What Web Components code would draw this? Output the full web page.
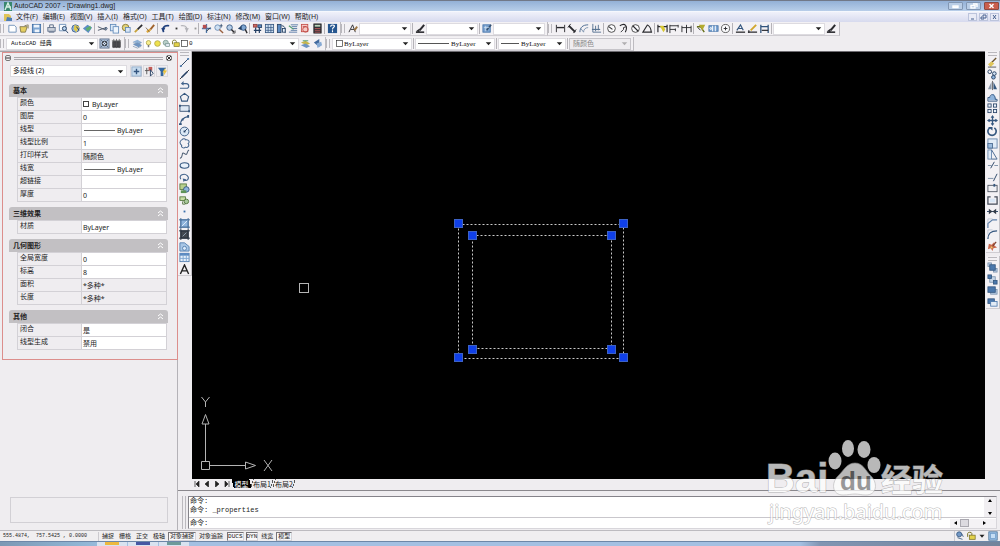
<!DOCTYPE html>
<html lang="zh-CN">
<head>
<meta charset="utf-8">
<title>AutoCAD 2007 - [Drawing1.dwg]</title>
<style>
html, body { margin: 0; height: 100%; overflow: hidden; }
body { font: 7px/10px "Noto Sans", "Noto Sans CJK SC", sans-serif; color: #222; background: #efedf0; }
</style>
</head>
<body>
<cad-app></cad-app>
<script>
const define = (name, css, render) => customElements.define(name, class extends HTMLElement {
  constructor() { super(); this.attachShadow({ mode: 'open' }); }
  connectedCallback() {
    const t = document.createElement('template');
    t.innerHTML = `<style>*{box-sizing:border-box}button{font:inherit;color:inherit;background:none;border:0;padding:0;margin:0}${css}</style>${render(this)}`;
    this.shadowRoot.replaceChildren(t.content.cloneNode(true));
  }
});

/* Icon artwork on a 12 x 12 grid */
const N = '#243f63', B = '#8fb4dc', K = '#2a2a2e';
const line = (d, c = N, w = 1) => `<path d="${d}" fill="none" stroke="${c}" stroke-width="${w}"/>`;
const fill = (d, c = N) => `<path d="${d}" fill="${c}"/>`;
const box = (x, y, w, h, f = '#e9f1fa', s = N) => `<rect x="${x}" y="${y}" width="${w}" height="${h}" fill="${f}" stroke="${s}" stroke-width=".9"/>`;
const circ = (x, y, r, f = 'none', s = N) => `<circle cx="${x}" cy="${y}" r="${r}" fill="${f}" stroke="${s}"/>`;
const ICONS = {
  new: fill('M2 2h6l2 2v6H2z', '#fff') + line('M2 2.5h6l2 2v5.5H2z', '#6d8fb8'),
  open: fill('M1 4h8l-2 6H2z', '#e5cf62') + line('M1 4h8l-2 6H2zM6 3l4-1v4', '#6d6438', .8),
  save: box(1.5, 1.5, 9, 9, '#7fa6d2', '#3f6ea6') + fill('M3 2h6v3H3zM4 7h5v3H4z', '#eef4fb'),
  plot: box(2, 5, 8, 4, '#c9ced8', '#596a85') + line('M4 5V2h4v3M3 10h6', '#596a85'),
  preview: fill('M1 1h7v8H1z', '#f8fbff') + line('M1.5 1.5h7v7h-7z', '#6d8fb8') + circ(7, 6, 2.2, '#b8d2ee') + line('M8.5 8l2.5 3'),
  publish: circ(6, 6, 4, '#86aede', '#4a6a96') + fill('M5 2l5 2-3 6-3-3z', '#dfc84c') + line('M7 4l3 4', N),
  dwf: fill('M1 6l5-4 5 3-4 6z', '#5d8cc4') + fill('M4 6l5-3 1 3-4 3z', '#5fae6b'),
  cut: line('M1 4l9 4M1 8l9-3', '#4a5568') + circ(10, 6, 1),
  copy: box(1.5, 1.5, 6, 7, '#dbe8f7', '#5f88b8') + box(4.5, 4, 6, 7, '#eef5fc', '#5f88b8'),
  paste: circ(5, 5, 3.6, '#e2d37a', '#8a7c38') + box(5, 5, 5, 5, '#dbe8f7', '#5f88b8'),
  match: line('M2 10l3-3', '#c6a23a', 2) + line('M5 7l5-5', K, 1.8),
  brush: line('M2 10l4-3', '#e0a93c', 2.6) + line('M6 7l4-5', '#a0622c', 2) + line('M1 5l4 5', '#6b5430', .8),
  undo: line('M4 10c-2-4 0-8 6-7', '#1f3f7c', 1.8) + fill('M1 6l5-1-2 4z', '#1f3f7c'),
  redo: line('M8 10c2-4 0-8-6-7', '#b3b3b8', 1.3) + fill('M11 6l-5-1 2 4z', '#b3b3b8'),
  pan: line('M6 1v10M1 6h10', '#4b78ac', 1.4) + fill('M2 2h4v4H2z', '#b84e4e') + line('M6 9l4-4', K),
  zoom: circ(5, 5, 3, '#cfe0f2', '#6d8fb8') + line('M7 7l4 4', '#9a6040', 1.5) + line('M9 1v4M7.500 3h3', N, .8),
  zoomw: circ(5, 5, 3, '#b6cde8', '#3f5f88') + line('M7 7l3 3', K, 1.6) + line('M11 8v3H8', K, .8),
  zoomp: circ(7, 5, 3, '#7fa6d2', '#33547f') + line('M9 7l2 4', K, 1.5) + fill('M1 6l4-3v5z', N),
  props: box(1.5, 1.5, 4, 3, '#d2695f', '#8b3d3d') + box(6.5, 2, 4, 3, '#5d8cc4') + line('M2 8h8M4 5v6M8 5v6', N, 1.3),
  dc: box(1.5, 1.5, 9, 9, '#cfe0f2', '#33547f') + line('M4.500 2v8M7.500 2v8M2 5h8M2 8h8', '#33547f', .8),
  tool: box(1.5, 1.5, 4, 9, '#5d8cc4') + line('M6 3c5 0 4 5 4 8', N) + box(7, 6, 3, 4),
  sheet: line('M3 2h8M4 4h6M5 6h5M3 8h7M1 10h9', '#5778a4') + line('M1 3l5 4', '#4c9a6c', 1.2),
  markup: box(1.5, 1.5, 7, 8, '#f5c9c5', '#c24a45') + circ(6, 7, 3, 'none', '#c24a45') + line('M3 4h4', '#c24a45'),
  calc: box(2, 1, 8, 10, '#343238', K) + fill('M3 2h6v2H3z', '#b8d2b8') + line('M3 6h6M3 8h6M3 10h6', '#d06060', .8),
  help: fill('M1 1h10v10H1z', '#26568f') + line('M4 4c0-3 5-2 4 0-1 1-2 1-2 3M6 8v2', '#fff', 1.2),
  text: line('M1 10l4-8 3 8M3 7h4', K) + line('M7 8l3-4', '#9a7440', 2),
  dim: line('M1 10h9', K, 1.7) + line('M5 8l5-6', K, 2.2) + fill('M1 9l4-3v4z', K),
  tbl: box(1, 2, 8, 8, '#7fa6d2', '#3f6ea6') + line('M5 8l5-6', '#35506f', 1.7) + line('M2 5h6M4 3v6', '#dce9f6', .7),
  linear: line('M1.500 2v8M10.500 2v8', K) + line('M2 5h8', K, 1.5),
  aligned: line('M2 3l7 7', K, 2) + line('M1 5l3-4M7 11l3-4', K),
  arc: line('M1 10c0-5 3-8 9-8', '#43648c') + line('M5 10c0-3 2-5 5-5M2 6l3 4', '#7c93ad'),
  ordinate: line('M2 1v9h9M5 3v6M8 2v6', '#55708f') + line('M1 7h9', '#55708f', 1.2),
  radius: circ(6, 6, 4.2, '#fbfbfd', '#444') + line('M3 4l4 3', K, 1.2),
  jog: line('M2 3c6-4 9 1 6 7', K, 1.2) + line('M3 10l3-3V5l3-1', K),
  diameter: circ(6, 6, 4.2, '#fbfbfd', '#444') + line('M3 3l6 6', K, 1.2),
  angular: line('M6 2L1 10h10M6 2c3 2 4 4 4 8', K, 1.2),
  quick: line('M1 2v8M11 2v8M1 4h10', K, 1.3) + fill('M3 3h4l2 4-2 3z', '#d9c832'),
  baseline: line('M1 2v9M1 3h9M1 7h6M10 2v3M7 6v3', K),
  cont: line('M1 3v7M6 2v9M11 3v7M1 5h10', K),
  leader: line('M1 4h4l4 6', '#67701c', 1.6) + fill('M3 2h7L7 8z', '#b3aa2e') + line('M2 5l3 3', K),
  toler: box(1, 3, 10, 6, '#7fa6d2', '#3f6ea6') + line('M5 3v6M8 3v6', '#fff') + circ(3, 6, 1, 'none', '#fff'),
  center: circ(6, 6, 4.4, '#fbfbfd', '#555') + line('M6 4v4M4 6h4', K),
  dimedit: line('M2 8l4-6 3 6M4 6h4', '#35577f', 1.3) + line('M1 10h10', K, 1.4),
  dimtext: line('M4 8l6-6', '#d1a62c', 2) + line('M1 10h10M2 8v3', K, 1.3),
  dimup: line('M2 2v9M10 2v9M2 4h8', '#31537c', 1.4) + line('M3 8h7', K, 1.3),
  ws: box(1, 1, 10, 10, '#a9bdd6', '#62728c') + circ(6, 6, 2.5, '#dce6f2', K) + line('M2 2l8 8M10 2l-8 8', '#47576e', .8),
  wslock: box(2, 4, 8, 6, '#47454a', K) + line('M1 3h10M3 1v10M6 1v10M9 1v10', '#555', .8),
  layers: fill('M1 4l5-2 5 3-4 2z', '#8fb0d4') + fill('M1 7l5-2 5 3-4 2z', '#6e94c2') + line('M1 5l5 2 4-2M1 9l5 2 4-2', '#7c93ad', .8),
  layerprev: fill('M1 5l5-2 5 3-4 2z', '#c8b64a') + fill('M1 8l5-2 5 3-4 2z', '#6e94c2') + line('M3 3h6', '#4c9a6c'),
  layerst: fill('M2 5l6-4v9z', '#42699d') + fill('M5 6l5-2 1 4-5 3z', '#86a9d3'),
  bulb: circ(6, 5, 3, '#f7ee8d', '#a99c3f') + line('M6 8v3', '#777', 2),
  sun: circ(6, 6, 3.8, '#efe14c', '#a9a04c'),
  vp: circ(5, 5, 3.4, '#b9cfc9', '#74918c') + box(5, 6, 5, 4, '#dfe7f0', '#74918c'),
  lock: box(4, 5, 7, 5, '#e3d249', '#7c7426') + line('M2 7V3c0-2 5-2 5 0v2', '#7c7426', 1.2),
  swatch: box(2, 2, 8, 8, '#fff', '#333'),
  l: line('M1.500 10.500L10.500 1.500') + fill('M1 9h2v2H1zM9 1h2v2H9z', '#4b78ac'),
  xl: line('M1 11L11 1', K) + line('M3 9l6-6', N, 1.7),
  pl: line('M1 9h7c4 0 3-5 0-5H4', '#43648c', 1.3) + fill('M5 1v5L2 4z', '#43648c'),
  poly: line('M6 1.500l4.500 3.500-1.500 5h-6l-1.500-5z', '#35577f', 1.2),
  rect: box(1, 3, 10, 6, '#dfe9f5') + fill('M0 2h2v2H0zM10 8h2v2h-2z', '#35577f'),
  arc2: line('M1.500 10.500c0-5 4-8 9-9', '#35577f', 1.2) + fill('M0 9h3v2H0zM9 0h2v3H9zM3 4h2v2H3z', '#35577f'),
  circle: circ(6, 6, 4.8, '#dbe8f5', '#35577f') + line('M6 6l3-3') + fill('M5 5h2v2H5z'),
  cloud: line('M3 2c2-2 4-1 4 0 4-1 5 3 3 4 2 3-1 5-3 4-2 2-5 0-4-2-3-2-2-5 0-6z', '#43648c', 1.1),
  spline: line('M1 10c4 0 1-8 5-5s2-3 5-4', '#4b5c72', 1.1),
  ell: '<ellipse cx="6" cy="6" rx="4.800" ry="3" fill="#e9f1fa" stroke="#35577f" stroke-width="1.200"/>',
  ellarc: line('M2 8C-1 3 6 1 9 4s0 6-3 5', '#43648c', 1.2) + fill('M4 7l4 1-3 3z', '#43648c'),
  ins: box(1, 1, 7, 6, '#b7cf8d', '#51733b') + circ(8, 7, 3, '#8fb4dc', '#35577f') + fill('M2 8h6v3H2z', '#5f9358'),
  block: box(1, 2, 6, 4, '#c8dba5', '#51733b') + circ(8, 7, 2.5, '#a8c89a', '#51733b') + line('M4 7v3h3', '#51733b'),
  point: fill('M5 5h2v2H5z', '#3a70ac'),
  hatch: box(2, 2, 8, 8, B, '#5681b0') + line('M0 2h12M0 10h12M2 0v12M10 0v12', '#3f6793') + line('M3 9l6-6', '#e3eef9'),
  grad: box(2, 2, 8, 8, '#43484f', '#27303c') + line('M0 2h12M0 10h12M2 0v12M10 0v12', '#27303c') + line('M4 8l4-4', '#93a4b7'),
  region: fill('M1 2h5l5 4v5H1z', '#a9c6e5') + line('M1 2h5l5 4v5H1z', '#5681b0') + circ(6, 8, 2.200, '#dceafa', '#5681b0'),
  table: box(1, 1.5, 10, 9, '#e5effa', '#4b78ac') + fill('M1 1h10v3H1z', '#5c8ac1') + line('M1 7h10M4.500 3v7M8 3v7', '#7fa6d2'),
  mtext: line('M1.500 11L6 1l4.500 10M3 7.500h6', '#222', 1.5),
  erase: line('M4 7l6-6', '#6b5430', 1.5) + fill('M1 8l4-3 3 2-4 4z', '#e0c65a') + line('M1 11h9', '#555'),
  cp: circ(3, 3, 2) + circ(8, 5, 2, '#cfe0f2') + circ(7, 9, 2, '#8fb4dc'),
  mirror: fill('M5 2v8H1z', '#8a98aa') + fill('M7 2v8h4z', '#35577f') + line('M6 1v10', K, .7),
  offset: fill('M2 9c-2-4 2-3 3-6 4-3 3 3 6 6z', B) + line('M1 10h10V8H9C9 1 3 2 3 6H1z', '#35577f'),
  array: box(1, 1, 3.5, 3.5) + box(7, 1, 3.5, 3.5) + box(1, 7, 3.5, 3.5) + box(7, 7, 3.5, 3.5),
  move: line('M6 1v10M1 6h10', '#35577f', 1.4) + fill('M6 0l2 3H4zM6 12l2-3H4zM0 6l3-2v4zM12 6L9 4v4z', '#35577f'),
  rotate: line('M3 2a4.500 4.500 0 1 0 5 0', '#35577f', 1.8) + fill('M1 1h5v4z', '#35577f'),
  scale: box(1, 1, 10, 10, '#e0ebf7', '#5d7ea7') + box(1, 6, 5, 5, '#9bbcdf', '#43648c'),
  stretch: box(1, 1, 4, 10, '#e0ebf7', '#5d7ea7') + line('M5 1l6 10H5', '#43648c'),
  trim: line('M1 6h4M8 6h4', '#7a8ea6') + line('M4 9l4-7', N),
  extend: line('M1 7h6', '#7a8ea6') + line('M7 10l4-8', N),
  brk: box(1, 2.5, 10, 7, '#f1f1f4', '#444b58') + line('M8 1v3', '#35577f', 2),
  brk2: line('M4 2H1v8h10V2H8', '#444b58', 1.4) + fill('M3 4h6v4H3z', '#d8e6f5'),
  join: line('M0 6h12', N) + fill('M2 3l4 3-4 3zM10 3L6 6l4 3z', '#333b48'),
  chamfer: line('M1 11V6l5-4h5', '#5d7ea7', 1.3) + line('M1 6V1h5', '#a7b5c6', .7),
  fillet: line('M1 11c0-6 3-9 10-9', '#35577f', 1.4) + line('M1 6V1h5', '#a7b5c6', .7),
  explode: fill('M2 3l3 1 3-3v4l3 2-4 1-1 3-2-3-3 1z', '#c8684d') + line('M6 6l4-5', '#7a3a28', 1.2) + fill('M4 6h2v2H4z', '#eec96a'),
  front: box(1, 1, 4, 4, '#b6cbe3', '#7c93ad') + box(7, 7, 4, 4, '#b6cbe3', '#7c93ad') + box(3, 3, 6, 6, '#4b78ac', '#35577f'),
  back: box(3, 3, 6, 6, '#c6d5e6', '#7c93ad') + box(1, 1, 4, 4, '#4b78ac', '#35577f') + box(7, 7, 4, 4, '#4b78ac', '#35577f'),
  above: box(4, 5, 7, 5, '#b6cbe3', '#7c93ad') + box(1, 2, 8, 6, '#4b78ac', '#35577f'),
  under: box(1, 2, 7, 5, '#4b78ac', '#35577f') + box(4, 5, 7, 5, '#e3ecf6', '#4b78ac'),
  pick: box(1, 1, 10, 10, '#c8dbee', '#8aa6c6') + line('M6 3v6M3 6h6', '#33547f', 1.5),
  select: line('M3 2v7M1 5h5', '#555') + fill('M5 1h4v4H5z', '#c25a54') + line('M7 4v7l3-3z', N),
  filter: fill('M1 2h9L7 6v5H4V6z', '#35679f') + fill('M9 2l-3 5h2l-1 4 4-6H9z', '#e9c33f'),
  dish: circ(5, 4, 3, '#7398c5', '#35577f') + line('M3 8l6 2M8 3l2 4', '#35577f'),
  clean: box(1, 1, 10, 10, '#9fc4e8', '#39658f') + box(3, 3, 6, 6, '#c5def5', '#6d9bc8'),
  dot: fill('M5 5h2v2H5z', '#333'),
  dotgrey: fill('M5 5h2v2H5z', '#999'),
  caret: fill('M3 4.500h6L6 8z', '#222'),
};
define('cad-icon', ':host{display:block;flex:none;width:11px;height:11px}svg{display:block;width:100%;height:100%}',
  el => `<svg viewBox="0 0 12 12" aria-hidden="true">${ICONS[el.getAttribute('name')] || ''}</svg>`);

/* Toolbar: a grip followed by slotted tools, horizontal or vertical */
define('cad-toolbar', `
:host{display:flex;align-items:center;flex:none;padding-right:2px;border-right:1px solid #bdbbc0;border-bottom:1px solid #cfcdd2;background:#f3f1f4}
.grip{flex:none;width:4px;margin-right:2px;align-self:stretch;border:solid #bab8bd;border-width:0 1px;margin-block:2px}
:host([vertical]){flex-direction:column;padding:0;border-right:1px solid #c4c2c7}
:host([vertical]) .grip{width:auto;height:4px;border-width:1px 0;margin:1px 2px}`,
  () => '<span class="grip"></span><slot></slot>');
define('cad-tools', `
:host{display:flex;align-items:center}button{width:12px;height:12px;display:grid;place-items:center}
button.narrow{width:7px;overflow:hidden}.sep{width:3px;height:11px;border-left:1px solid #b5b3b8;margin-left:1px;margin-right:-1px}
:host([vertical]){display:grid;grid-auto-rows:1fr;justify-items:center;align-items:center}:host([vertical]) button{height:11px}`,
  el => el.getAttribute('items').split(' ').map(n => n === '|' ? '<span class="sep"></span>' :
    `<button type="button" aria-label="${n}" class="${n.startsWith('dot') ? 'narrow' : ''}"><cad-icon name="${n}"></cad-icon></button>`).join(''));
define('cad-combo', `
:host{display:flex;align-items:center;flex:none;width:var(--w,52px);height:12px;background:#fff;border:1px solid #dddbe0;padding-left:var(--pad,2px)}
select{appearance:none;flex:1;min-width:0;border:0;background:none;padding:0;margin:0;font:var(--font,6px/10px "Liberation Mono","Noto Sans CJK SC",monospace);color:#111;opacity:1}
:host([disabled]){background:#efedf0;border-color:#c6c4c9}:host([disabled]) select{color:#888}
:host([disabled]) .arrow{opacity:.3}.rule{width:var(--rule);height:1px;background:#555;margin-right:2px}`,
  el => `<slot></slot>${el.hasAttribute('rule') ? '<span class="rule"></span>' : ''}
  <select aria-label="${el.getAttribute('label')}" ${el.hasAttribute('disabled') ? 'disabled' : ''}><option>${el.getAttribute('value') || ''}</option></select>
  <cad-icon class="arrow" name="caret"></cad-icon>`);

define('cad-titlebar', `
:host{display:flex;align-items:center;height:12px;padding:0 1px 0 4px;border-top:1px solid #717888;border-bottom:1px solid #f5f8fd;background:linear-gradient(#93b0d6,#b8cee9)}
h1{font:7px/10px "Liberation Sans",sans-serif;margin:0 auto 0 2px;color:#222}
.win{display:flex;gap:3px}.win button{width:15px;height:8px;border:1px solid #8297b4;border-radius:1px;background:#b9cde6;display:grid;place-items:center}
.win button.x{background:#ca5e4c;border-color:#8d4a42}.win svg{width:9px;height:6px;display:block}
path,rect{fill:none;stroke:#fff;stroke-width:1.400}`,
  () => `<svg width="8" height="9" viewBox="0 0 8 9" style="display:block"><path d="M0 0h8v9H0z" style="fill:#39876f;stroke:none"/><path d="M1 8l3-7 3 7M2 5h5" style="stroke:#d7efe4"/></svg>
<h1>AutoCAD 2007 - [Drawing1.dwg]</h1><div class="win">
<button type="button" aria-label="最小化"><svg viewBox="0 0 9 6"><rect x="2" y="3" width="5" height="1.500"/></svg></button>
<button type="button" aria-label="还原"><svg viewBox="0 0 9 6"><rect x="2" y="2.500" width="4" height="2.500"/><path d="M4 1h4v3"/></svg></button>
<button type="button" class="x" aria-label="关闭"><svg viewBox="0 0 9 6"><path d="M2.500 1l4 4M6.500 1l-4 4"/></svg></button></div>`);

define('cad-menubar', `
:host{display:flex;align-items:center;height:10px;padding:0 1px 0 4px;background:linear-gradient(#f0f1fa,#d7daee)}
nav{display:flex;gap:5px;margin:0 auto 0 3px}button{white-space:nowrap}
.mdi{display:flex;gap:2px}.mdi button{width:9px;height:8px;border:1px solid #bcc4dc;background:#e9ebf6;display:grid;place-items:center}
.mdi svg{width:7px;height:6px;display:block}`,
  () => `<svg width="9" height="9" viewBox="0 0 9 9"><path d="M0 1h5l2 2v5H0z" fill="#dfc45a"/><path d="M3 4l5 1v3H2z" fill="#4d7db3"/></svg>
<nav>${['文件(F)', '编辑(E)', '视图(V)', '插入(I)', '格式(O)', '工具(T)', '绘图(D)', '标注(N)', '修改(M)', '窗口(W)', '帮助(H)'].map(m => `<button type="button">${m}</button>`).join('')}</nav>
<div class="mdi">${['M2 5h3', 'M1 3h3v2H1zM3 2V1h3v3H5', 'M2 1l3 4M5 1L2 5'].map((d, i) => `<button type="button" aria-label="${['最小化', '还原', '关闭'][i]}"><svg viewBox="0 0 7 6"><path d="${d}" fill="none" stroke="#47618f"/></svg></button>`).join('')}</div>`);

/* One collapsible property group */
define('cad-section', `
:host{display:block}
h2{display:flex;align-items:center;justify-content:space-between;margin:0;height:13px;padding:0 4px 0 4px;font-size:7px;line-height:12px;font-weight:700;background:#c2c0c3;border-radius:3px 3px 0 0;color:#222}
table{border-collapse:collapse;table-layout:fixed;width:calc(100% - 9px);margin-left:8px}
th,td{height:13px;padding:0 0 0 2px;border:1px solid #d3d1d6;font-weight:400;text-align:left;line-height:9px;overflow:hidden;white-space:nowrap}
th{width:64px;vertical-align:top}td{background:#fff;padding-left:1px}td.ro{background:#efedf0}
.v{display:flex;align-items:center;gap:2px}.v i{width:31px;height:1px;background:#666;margin-left:1px}.v b{width:6px;height:6px;border:1px solid #444;margin-right:1px}`,
  el => `<h2>${el.getAttribute('heading')}<svg width="7" height="7" viewBox="0 0 7 7"><path d="M1 3l2.500-2L6 3M1 6l2.500-2L6 6" fill="none" stroke="#fff"/></svg></h2>
<table>${el.getAttribute('rows').split(';').map(r => { const [k, v, t] = r.split('='); return `<tr><th scope="row">${k}</th><td class="${t === 'ro' ? 'ro' : ''}"><div class="v">${t === 'line' ? '<i></i>' : t === 'box' ? '<b></b>' : ''}<span>${v}</span></div></td></tr>`; }).join('')}</table>`);

define('cad-palette', `
:host{display:flex;flex-direction:column;position:relative;width:178px;flex:none;border-right:1px solid #b4b2b7;padding:3px 9px 7px 9px;background:#efedf0;border-top:1px solid #a5a3a8}
.bar{display:flex;align-items:center;gap:3px;height:6px;margin:0 -4px}.bar span{flex:1;height:3px;border:solid #aaa8ad;border-width:1px 0}
.bar button{width:6px;height:6px;border:1px solid #777;border-radius:2px;line-height:0}.bar svg{display:block;width:4px;height:4px}
.pick{display:flex;align-items:center;margin:4px 0 7px 1px}.pick cad-combo{flex:1;margin-right:2px}
.pick button{width:12px;height:12px;margin-left:1px;border:1px solid #dad8dd;display:grid;place-items:center}
.groups{display:grid;gap:5px}.note{margin:auto 0 0 1px;height:26px;border:1px solid #d2d0d5}
.mark{position:absolute;left:2px;right:-1px;top:0;height:308px;border:1px solid #dc8e8c;pointer-events:none}`,
  () => `<div class="bar"><button type="button" aria-label="自动隐藏"><svg viewBox="0 0 4 4"><path d="M0 2h4" stroke="#333"/></svg></button><span></span><button type="button" aria-label="关闭"><svg viewBox="0 0 4 4"><path d="M0 0l4 4M4 0L0 4" stroke="#333"/></svg></button></div>
<div class="pick"><cad-combo label="对象" value="多段线 (2)" style="--w:auto;--font:7px/10px 'Noto Sans','Noto Sans CJK SC',sans-serif"></cad-combo>
${['pick', 'select', 'filter'].map(n => `<button type="button" aria-label="${n}"><cad-icon name="${n}"></cad-icon></button>`).join('')}</div>
<div class="groups">
<cad-section heading="基本" rows="颜色=ByLayer=box;图层=0;线型=ByLayer=line;线型比例=1;打印样式=随颜色=ro;线宽=ByLayer=line;超链接=;厚度=0"></cad-section>
<cad-section heading="三维效果" rows="材质=ByLayer"></cad-section>
<cad-section heading="几何图形" rows="全局宽度=0;标高=8;面积=*多种*=ro;长度=*多种*=ro"></cad-section>
<cad-section heading="其他" rows="闭合=是;线型生成=禁用"></cad-section></div>
<div class="note"></div><div class="mark"></div>`);

/* Model space: selected polylines with their grips, pick box and UCS marker */
define('cad-drawing', `
:host{display:block;position:relative;flex:1;min-height:0;background:#000;overflow:hidden}
.model{position:absolute;inset:0;width:100%;height:100%}.ucs{position:absolute;left:5px;bottom:7px}`,
  () => `<svg class="model"><g fill="none" stroke="#c9c9c9" stroke-dasharray="2 2">
<rect x="266.500" y="172.500" width="165" height="134"/><rect x="280.500" y="183.500" width="139" height="113"/></g>
<rect x="107.500" y="231.500" width="9" height="9" fill="none" stroke="#b5b5b5"/>
<g fill="#1040e8" stroke="#3d62c4">${[[262, 167], [427, 167], [262, 301], [427, 301], [276, 179], [415, 179], [276, 293], [415, 293]].map(([x, y]) => `<rect x="${x + .5}" y="${y + .5}" width="8" height="8"/>`).join('')}</g></svg>
<svg class="ucs" width="80" height="78" viewBox="0 0 80 78"><g fill="none" stroke="#b4b4b4"><path d="M4.500 67.500h8v8h-8zM8.500 67V30M13 71.500h35M8.500 20.500l3.500 9.500H5zM58.500 71.500l-10 3.500v-7zM4.500 3l4 5 4-5M8.500 8v5M67 66l8 11M75 66l-8 11"/></g></svg>`);

define('cad-tabs', `
:host{display:flex;align-items:center;height:9px;margin-bottom:2px;font-size:7px;line-height:8px;font-family:"Noto Sans CJK SC",sans-serif}
.nav{width:10px;height:9px;display:grid;place-items:center}.nav svg{width:6px;height:6px}
.tab{height:9px;width:22px;background:linear-gradient(105deg,transparent 8%,#555 8% 11%,#efedf0 11% 89%,#555 89% 92%,transparent 92%);white-space:nowrap}
.tab.on{width:19px;color:#fff;background:linear-gradient(75deg,transparent 8%,#000 8% 92%,transparent 92%)}`,
  () => ['M1 0v6M5 0v6L2 3z', 'M4.500 0v6L1 3z', 'M1.500 0v6L5 3z', 'M5 0v6M1 0v6l3-3z'].map((d, i) => `<button type="button" class="nav" aria-label="布局导航 ${i + 1}"><svg viewBox="0 0 6 6"><path d="${d}" fill="#222" stroke="#222" stroke-width=".700"/></svg></button>`).join('') +
    '<button type="button" class="tab on">模型</button><button type="button" class="tab">布局1</button><button type="button" class="tab">布局2</button>');

define('cad-command', `
:host{display:grid;grid-template-columns:4px 1fr;gap:2px;height:40px;flex:none;border-top:1px solid #8a888d;padding:5px 3px 1px 4px;font:7px/9px "Liberation Mono","Noto Sans CJK SC",monospace}
.grip{border:solid #bbb9be;border-width:0 1px}.win{display:grid;grid-template-rows:1fr 10px;border:1px solid #85838a;border-color:#85838a #d8d6db #d8d6db #85838a;background:#fff;min-height:0}
.log{display:flex;border-bottom:1px solid #c9c7cc;min-height:0}.log pre{font:inherit;margin:0 0 0 1px;flex:1}
.vs{width:12px;display:flex;flex-direction:column;justify-content:space-between;align-items:center;background:#f1eff2;padding:2px 0}
.in{display:flex;align-items:center;padding-left:1px}.in input{font:inherit;border:0;padding:0;margin:0 0 0 4px;flex:1;min-width:0;background:none;outline:0}
.hs{display:flex;align-items:center;gap:3px;width:46px;height:9px;background:#f4f2f5;padding:0 10px 0 4px}.hs i{width:9px;height:8px;background:#dcdae0;border:1px solid #aaa8b0}.hs svg:last-child{margin-left:auto}svg{display:block}`,
  () => `<span class="grip"></span><div class="win"><div class="log"><pre>命令:
命令: _properties</pre><div class="vs"><svg width="4" height="3"><path d="M0 3l2-3 2 3z"/></svg><svg width="4" height="3"><path d="M0 0l2 3 2-3z"/></svg></div></div>
<div class="in"><label for="cmd">命令:</label><input id="cmd" type="text"><div class="hs"><svg width="3" height="4"><path d="M3 0L0 2l3 2z"/></svg><i></i><svg width="3" height="4"><path d="M0 0l3 2-3 2z"/></svg></div></div></div>`);

define('cad-status', `
:host{display:flex;align-items:center;height:11px;flex:none;padding:0 2px;background:#f0eef0;border-top:1px solid #bdbbc0;font:6px/9px "Liberation Mono","Noto Sans CJK SC",monospace}
output{display:block;width:97px;white-space:pre;font-size:5px;border-right:1px solid #cccacf;padding-left:1px}
.modes{display:flex;gap:2px;margin-left:2px;margin-right:auto}.modes button{height:9px;line-height:7px;border:1px solid transparent;padding:0}
.modes button.on{border-color:#77757a #d5d3d8 #d5d3d8 #77757a;background:#f8f7f9}.modes .lat{font-size:6px}.modes button.cjk{padding:0 1px;margin-left:-1px}
.tray{display:flex;align-items:center;gap:1px;border-left:1px solid #cccacf}.tray cad-icon{width:10px;height:10px}`,
  () => `<output>555.4874,  757.5425 , 0.0000</output><div class="modes">${[['捕捉', ''], ['栅格', ''], ['正交', ''], ['极轴', ''], ['对象捕捉', 'on'], ['对象追踪', ''], ['DUCS', 'on lat'], ['DYN', 'on lat'], ['线宽', ''], ['模型', 'on']].map(([t, c]) => `<button type="button" class="${c} ${c.includes('lat') ? '' : 'cjk'}">${t}</button>`).join('')}</div>
<div class="tray"><cad-icon name="dish"></cad-icon><cad-icon name="lock"></cad-icon><cad-icon name="caret"></cad-icon><cad-icon name="clean"></cad-icon></div>`);

define('cad-taskbar', `
:host{display:flex;height:5px;flex:none;padding-left:97px;gap:1px;border-top:1px solid #6d87a8;background:linear-gradient(90deg,#7c98b4,#8fb5d4 8%,#a4c0e2 12%,#a4c0e2 80%,#8195b2 82%,#73839b)}
i{width:30px;background:#d9e3f0;display:flex;justify-content:center}i b{width:14px;height:3px;background:var(--c)}`,
  () => '<i style="--c:#edb93f"><b></b></i><i style="--c:#4657a3"><b></b></i><i style="--c:#6e9a9a"><b></b></i>');

define('cad-watermark', `
:host{display:block;position:absolute;right:48px;bottom:18px;width:186px;height:92px;pointer-events:none}svg{display:block;overflow:visible}
text{font-family:"Liberation Sans","Noto Sans CJK SC",sans-serif;fill:#fff;stroke:#999;stroke-width:1;paint-order:stroke}`,
  () => `<svg width="186" height="92" viewBox="0 0 186 92"><g opacity=".720">
<g fill="#fff"><ellipse cx="69" cy="25" rx="6.500" ry="8.500"/><ellipse cx="82" cy="12.500" rx="6" ry="8.500"/><ellipse cx="98" cy="13.500" rx="6.500" ry="8.500"/><ellipse cx="108" cy="29" rx="6.500" ry="8"/>
<path d="M89 27c8 0 10 7 16 13 7 7 6 19-5 19-5 0-7-1-11-1s-7 1-12 1c-11 0-12-12-5-19 6-6 9-13 17-13z" stroke="#aaa" stroke-width=".700"/></g>
<text x="0" y="56" font-size="40" font-weight="700">Bai</text>
<text x="74" y="54" font-size="26" font-weight="700" style="fill:#777;stroke:none">du</text>
<text x="115" y="55" font-size="31" font-weight="700">经验</text>
<text x="3" y="83" font-size="20" style="font-family:'Noto Sans',sans-serif">jingyan.baidu.com</text></g></svg>`);

define('cad-app', `
:host{display:flex;flex-direction:column;height:100vh;position:relative;background:#efedf0}
.row{display:flex;height:14px;flex:none}.row cad-toolbar{height:14px}.row.first{height:15px}
.work{display:flex;flex:1;min-height:0}.right{flex:1;display:flex;flex-direction:column;min-width:0}
.stage{display:flex;flex:1;min-height:0}.side{width:14px;flex:none}.side.r{width:15px;padding-left:1px;display:flex;flex-direction:column;gap:3px}
.stage .mid{flex:1;min-width:0;display:flex;flex-direction:column;border-top:1px solid #6e6c71}
.draw{height:218px}.modify{height:195px}.order{height:46px}
.serif{--font:7px/10px "Liberation Serif","Noto Sans CJK SC",serif}.layer{--pad:0px}.layer cad-icon{width:9px;height:9px}.serif cad-icon{width:9px;height:9px}`,
  () => `<cad-titlebar></cad-titlebar><cad-menubar></cad-menubar>
<div class="row first">
<cad-toolbar><cad-tools items="new open save | plot preview publish dwf | cut copy paste match brush | undo dot redo dotgrey | pan zoom zoomw zoomp | props dc tool sheet markup calc | help"></cad-tools></cad-toolbar>
<cad-toolbar><cad-tools items="text"></cad-tools><cad-combo label="文字样式"></cad-combo><cad-tools items="| dim"></cad-tools><cad-combo label="标注样式"></cad-combo><cad-tools items="| tbl"></cad-tools><cad-combo label="表格样式"></cad-combo></cad-toolbar>
<cad-toolbar><cad-tools items="linear aligned arc ordinate | radius jog diameter angular | quick baseline cont | leader toler center | dimedit dimtext dimup |"></cad-tools><cad-combo label="当前标注样式"></cad-combo><cad-tools items="dim"></cad-tools></cad-toolbar>
</div>
<div class="row">
<cad-toolbar><cad-combo label="工作空间" value="AutoCAD 经典" style="--w:92px;--pad:4px"></cad-combo><cad-tools items="ws wslock"></cad-tools></cad-toolbar>
<cad-toolbar><cad-tools items="layers"></cad-tools><cad-combo class="layer" label="图层" value="0" style="--w:156px"><cad-icon name="bulb"></cad-icon><cad-icon name="sun"></cad-icon><cad-icon name="vp"></cad-icon><cad-icon name="lock"></cad-icon><cad-icon name="swatch"></cad-icon></cad-combo><cad-tools items="layerprev layerst"></cad-tools></cad-toolbar>
<cad-toolbar><cad-combo class="serif" label="颜色" value="ByLayer" style="--w:80px"><cad-icon name="swatch"></cad-icon></cad-combo><cad-tools items="|"></cad-tools><cad-combo class="serif" label="线型" value="ByLayer" rule style="--w:80px;--rule:31px"></cad-combo><cad-tools items="|"></cad-tools><cad-combo class="serif" label="线宽" value="ByLayer" rule style="--w:68px;--rule:18px"></cad-combo><cad-tools items="|"></cad-tools><cad-combo class="serif" label="打印样式" value="随颜色" disabled style="--w:62px;--pad:3px"></cad-combo></cad-toolbar>
</div>
<div class="work"><cad-palette></cad-palette>
<div class="right"><div class="stage">
<div class="side"><cad-toolbar vertical><cad-tools class="draw" vertical items="l xl pl poly rect arc2 circle cloud spline ell ellarc ins block point hatch grad region table mtext"></cad-tools></cad-toolbar></div>
<div class="mid"><cad-drawing></cad-drawing><cad-tabs></cad-tabs></div>
<div class="side r"><cad-toolbar vertical><cad-tools class="modify" vertical items="erase cp mirror offset array move rotate scale stretch trim extend brk brk2 join chamfer fillet explode"></cad-tools></cad-toolbar><cad-toolbar vertical><cad-tools class="order" vertical items="front back above under"></cad-tools></cad-toolbar></div>
</div><cad-command></cad-command></div></div>
<cad-status></cad-status><cad-taskbar></cad-taskbar><cad-watermark></cad-watermark>`);
</script>
</body>
</html>
